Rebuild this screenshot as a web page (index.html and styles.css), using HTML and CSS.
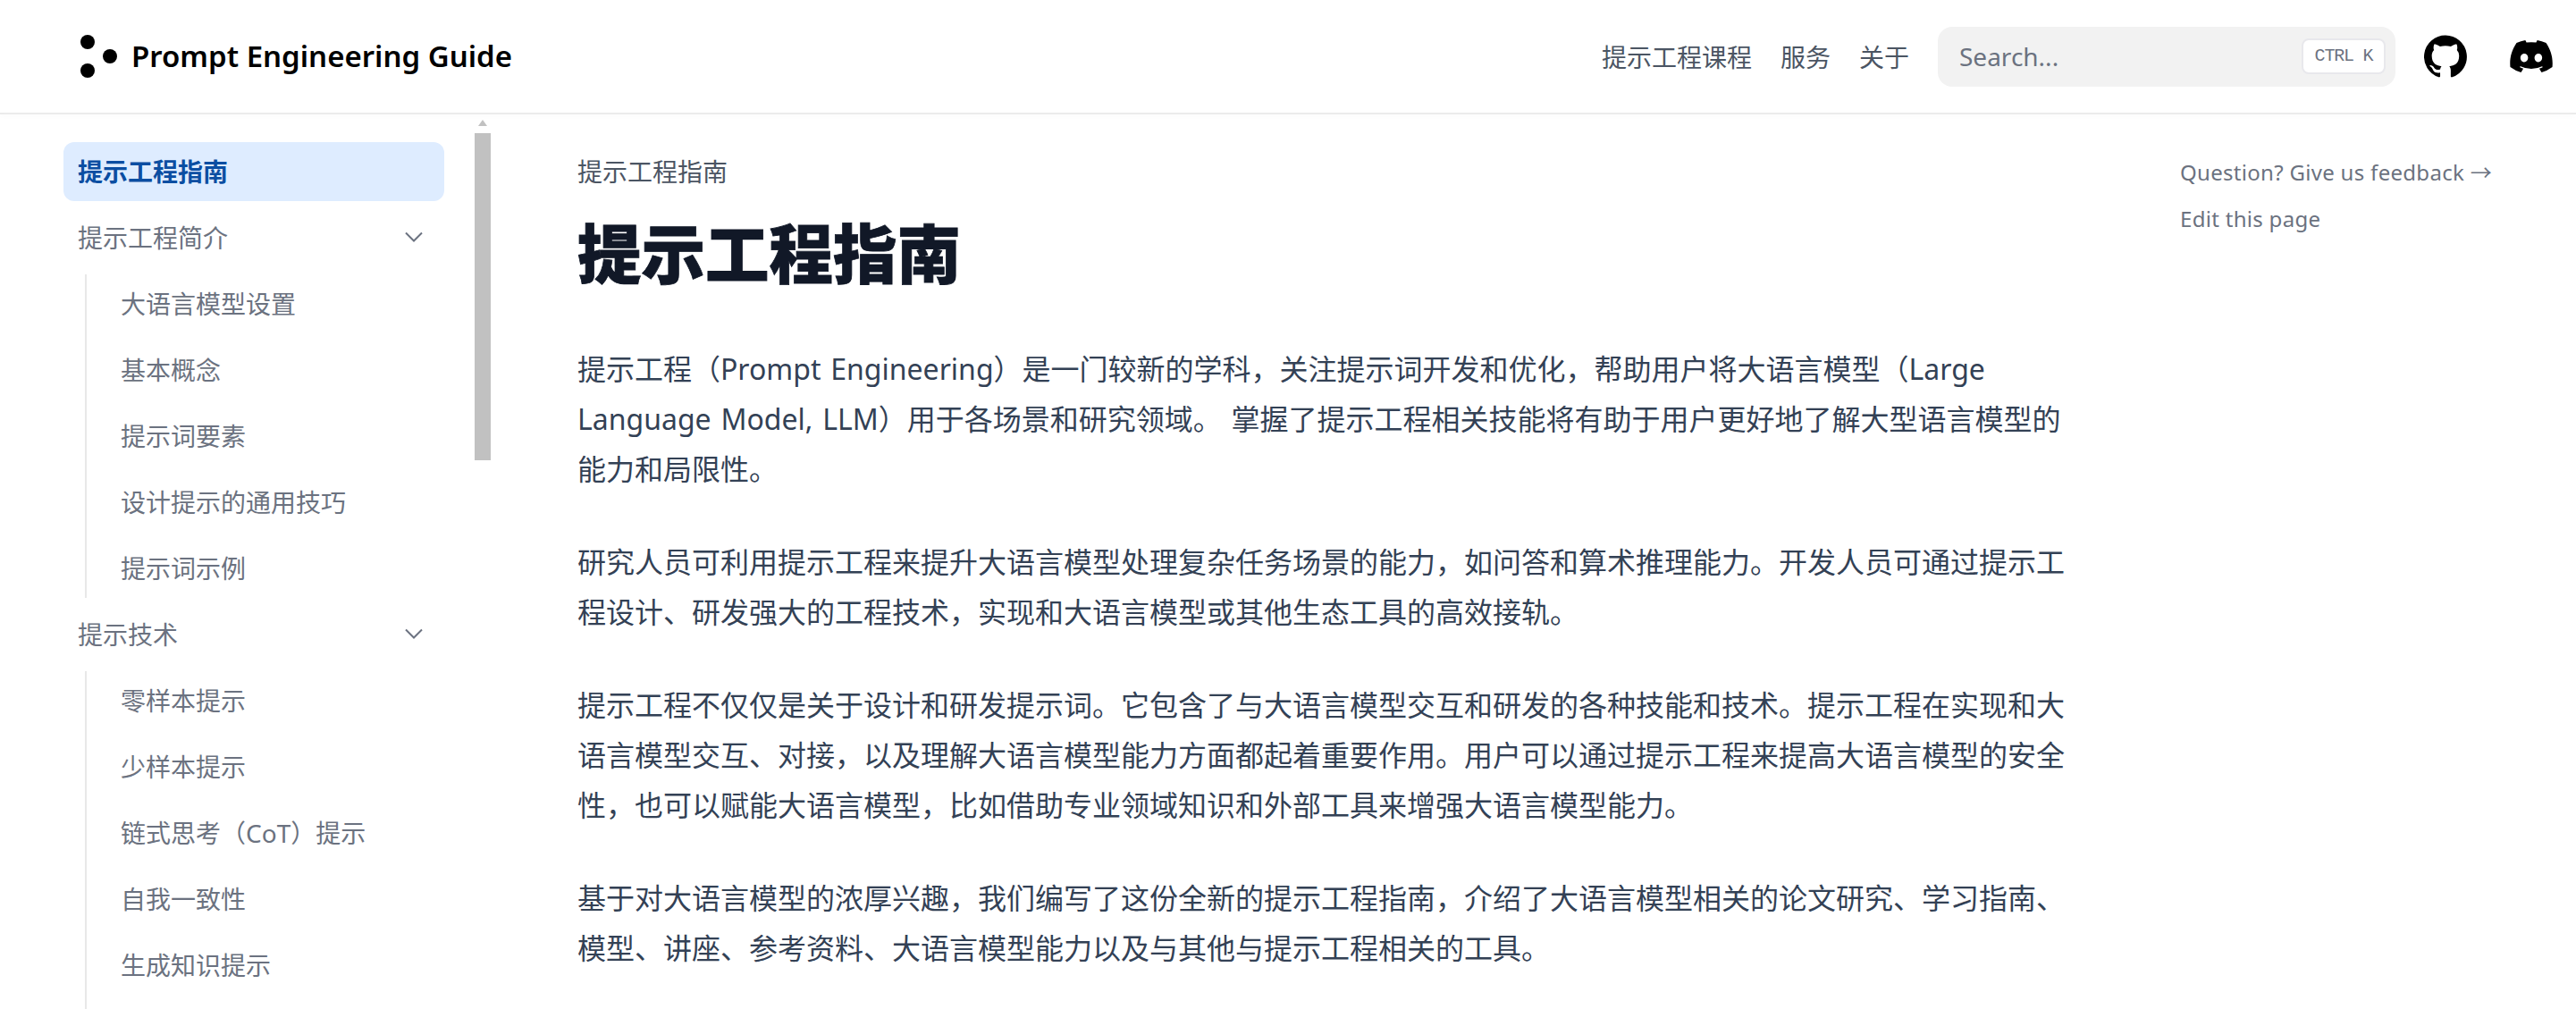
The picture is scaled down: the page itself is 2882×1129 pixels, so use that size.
FILE: index.html
```html
<!DOCTYPE html>
<html lang="zh-CN">
<head>
  <meta charset="utf-8">
  <title>提示工程指南 | Prompt Engineering Guide</title>
  <link rel="stylesheet" href="styles.css">
</head>
<body>
  <header class="navbar">
    <a class="brand">
      <svg class="brand-logo" width="41" height="48" viewBox="0 0 41 48"><circle cx="8" cy="8" r="8"/><circle cx="8" cy="40" r="8"/><circle cx="33" cy="24" r="8"/></svg>
      <span class="brand-name">Prompt Engineering Guide</span>
    </a>
    <nav class="nav-links">
      <a>提示工程课程</a>
      <a>服务</a>
      <a>关于</a>
    </nav>
    <div class="search">
      <span class="search-text">Search...</span>
      <kbd class="search-key">CTRL K</kbd>
    </div>
    <a class="nav-icon">
      <svg width="48" height="48" viewBox="0 0 24 24"><path d="M12 .3a12 12 0 0 0-3.8 23.38c.6.12.83-.26.83-.57l-.02-2.04c-3.34.72-4.04-1.61-4.04-1.61-.55-1.39-1.34-1.76-1.34-1.76-1.08-.74.08-.73.08-.73 1.2.08 1.84 1.24 1.84 1.24 1.07 1.83 2.8 1.3 3.49 1 .1-.78.42-1.3.76-1.6-2.67-.31-5.47-1.34-5.47-5.93 0-1.31.47-2.38 1.24-3.22-.14-.3-.54-1.52.1-3.18 0 0 1-.32 3.3 1.23a11.5 11.5 0 0 1 6 0c2.28-1.55 3.29-1.23 3.29-1.23.64 1.66.24 2.88.12 3.18a4.65 4.65 0 0 1 1.23 3.22c0 4.61-2.8 5.62-5.48 5.92.42.36.81 1.1.81 2.22l-.01 3.29c0 .31.2.69.82.57A12 12 0 0 0 12 .3Z"/></svg>
    </a>
    <a class="nav-icon">
      <svg width="48" height="36" viewBox="0 0 127.14 96.36"><path d="M107.7 8.07A105.15 105.15 0 0 0 81.47 0a72.06 72.06 0 0 0-3.36 6.83 97.68 97.68 0 0 0-29.11 0A72.37 72.37 0 0 0 45.64 0a105.89 105.89 0 0 0-26.25 8.09C2.79 32.65-1.71 56.6.54 80.21a105.73 105.73 0 0 0 32.17 16.15 77.7 77.7 0 0 0 6.89-11.11 68.42 68.42 0 0 1-10.85-5.18c.91-.66 1.8-1.34 2.66-2a75.57 75.57 0 0 0 64.32 0c.87.71 1.76 1.39 2.66 2a68.68 68.68 0 0 1-10.87 5.19 77 77 0 0 0 6.89 11.1 105.25 105.25 0 0 0 32.19-16.14c2.64-27.38-4.51-51.11-18.9-72.15ZM42.45 65.69C36.18 65.69 31 60 31 53s5-12.74 11.43-12.74S54 46 53.89 53s-5.05 12.69-11.44 12.69Zm42.24 0C78.41 65.69 73.25 60 73.25 53s5-12.74 11.44-12.74S96.23 46 96.12 53s-5.04 12.69-11.43 12.69Z"/></svg>
    </a>
  </header>

  <div class="page">
    <aside class="sidebar">
      <ul class="menu">
        <li class="menu-item active">提示工程指南</li>
        <li class="menu-item">提示工程简介<svg class="chevron" width="36" height="36" viewBox="0 0 20 20"><path d="M5 7.5l5 5 5-5"/></svg></li>
        <li>
          <ul class="submenu">
            <li class="menu-item">大语言模型设置</li>
            <li class="menu-item">基本概念</li>
            <li class="menu-item">提示词要素</li>
            <li class="menu-item">设计提示的通用技巧</li>
            <li class="menu-item">提示词示例</li>
          </ul>
        </li>
        <li class="menu-item">提示技术<svg class="chevron" width="36" height="36" viewBox="0 0 20 20"><path d="M5 7.5l5 5 5-5"/></svg></li>
        <li>
          <ul class="submenu submenu-long">
            <li class="menu-item">零样本提示</li>
            <li class="menu-item">少样本提示</li>
            <li class="menu-item">链式思考（CoT）提示</li>
            <li class="menu-item">自我一致性</li>
            <li class="menu-item">生成知识提示</li>
          </ul>
        </li>
      </ul>
      <div class="scroll-arrow"></div>
      <div class="scroll-thumb"></div>
    </aside>

    <main class="content">
      <div class="breadcrumb">提示工程指南</div>
      <h1 class="title">提示工程指南</h1>
      <p>提示工程（Prompt Engineering）是一门较新的学科，关注提示词开发和优化，帮助用户将大语言模型（Large Language Model, LLM）用于各场景和研究领域。 掌握了提示工程相关技能将有助于用户更好地了解大型语言模型的能力和局限性。</p>
      <p>研究人员可利用提示工程来提升大语言模型处理复杂任务场景的能力，如问答和算术推理能力。开发人员可通过提示工程设计、研发强大的工程技术，实现和大语言模型或其他生态工具的高效接轨。</p>
      <p>提示工程不仅仅是关于设计和研发提示词。它包含了与大语言模型交互和研发的各种技能和技术。提示工程在实现和大语言模型交互、对接，以及理解大语言模型能力方面都起着重要作用。用户可以通过提示工程来提高大语言模型的安全性，也可以赋能大语言模型，比如借助专业领域知识和外部工具来增强大语言模型能力。</p>
      <p>基于对大语言模型的浓厚兴趣，我们编写了这份全新的提示工程指南，介绍了大语言模型相关的论文研究、学习指南、模型、讲座、参考资料、大语言模型能力以及与其他与提示工程相关的工具。</p>
    </main>

    <aside class="toc">
      <a>Question? Give us feedback →</a>
      <a>Edit this page</a>
    </aside>
  </div>
</body>
</html>
```

FILE: styles.css
```css
* {
  box-sizing: border-box;
}

html, body {
  height: 100%;
}

body {
  margin: 0;
  overflow: hidden;
  background: #fff;
  font-family: "Noto Sans", "Noto Sans CJK SC", sans-serif;
  font-size: 32px;
  color: #334155;
}

ul {
  list-style: none;
  margin: 0;
  padding: 0;
}

/* top bar */
.navbar {
  display: flex;
  align-items: center;
  height: 128px;
  padding: 0 26px 0 90px;
  border-bottom: 2px solid #ebebeb;
  box-shadow: 0 2px 6px rgba(0, 0, 0, .02);
}

.brand {
  display: flex;
  align-items: center;
  gap: 16px;
  color: #000;
  margin-right: auto;
}

.brand-logo {
  display: block;
}

.brand-name {
  font-size: 33px;
  font-weight: 600;
  line-height: 48px;
  white-space: nowrap;
}

.nav-links {
  display: flex;
  gap: 32px;
  font-size: 28px;
  color: #4b5563;
}

.search {
  display: flex;
  align-items: center;
  justify-content: space-between;
  width: 512px;
  height: 67px;
  margin-left: 32px;
  padding: 0 11px 0 24px;
  background: #f2f2f2;
  border-radius: 16px;
}

.search-text {
  font-size: 28px;
  color: #6b7280;
}

.search-key {
  display: block;
  width: 94px;
  height: 40px;
  line-height: 36px;
  text-align: center;
  font-family: "Liberation Mono", monospace;
  font-size: 20px;
  letter-spacing: -1.2px;
  color: #6b7280;
  white-space: pre;
  background: #fff;
  border: 2px solid #e8e8ec;
  border-radius: 8px;
}

.nav-icon {
  display: flex;
  align-items: center;
  margin-left: 32px;
}

.nav-icon + .nav-icon {
  margin-left: 48px;
}

/* page columns */
.page {
  display: flex;
  height: calc(100% - 128px);
}

.sidebar {
  position: relative;
  flex: none;
  width: 552px;
  height: 100%;
  padding: 31px 55px 0 71px;
  overflow: hidden;
}

.menu-item {
  display: flex;
  align-items: center;
  justify-content: space-between;
  height: 66px;
  margin-bottom: 8px;
  padding: 0 16px 2px;
  font-size: 28px;
  color: #6b7280;
  border-radius: 12px;
}

.menu-item.active {
  background: #deecff;
  color: #0b4ea2;
  font-weight: 700;
}

.chevron {
  fill: none;
  stroke: #6b7280;
  stroke-width: 1.1;
}

.submenu {
  margin: 0 0 8px 24px;
  border-left: 2px solid #e8e8e8;
}

.submenu .menu-item {
  padding-left: 38px;
}

.submenu .menu-item:last-child {
  margin-bottom: 0;
}

.submenu-long {
  padding-bottom: 74px;
}

.scroll-arrow {
  position: absolute;
  top: 6px;
  left: 535px;
  border: 5px solid transparent;
  border-top: 0;
  border-bottom: 7px solid #c1c1c1;
}

.scroll-thumb {
  position: absolute;
  top: 21px;
  left: 531px;
  width: 18px;
  height: 366px;
  background: #c1c1c1;
}

/* article */
.content {
  flex: none;
  width: 1664px;
  margin-left: 94px;
  padding-top: 31px;
}

.breadcrumb {
  font-size: 28px;
  line-height: 66px;
  color: #4b5563;
}

.title {
  margin: 15px 0 0;
  font-size: 71.5px;
  line-height: 88px;
  font-weight: 900;
  -webkit-text-stroke: .8px #111827;
  color: #111827;
}

.content p {
  margin: 57px 0 0;
  line-height: 56px;
  word-spacing: 2.5px;
}

.content p + p {
  margin-top: 48px;
}

.toc {
  display: flex;
  flex-direction: column;
  gap: 18px;
  margin-left: 129px;
  padding-top: 48px;
  font-size: 24px;
  letter-spacing: .3px;
  line-height: 34px;
  color: #6b7280;
  white-space: nowrap;
}
```
